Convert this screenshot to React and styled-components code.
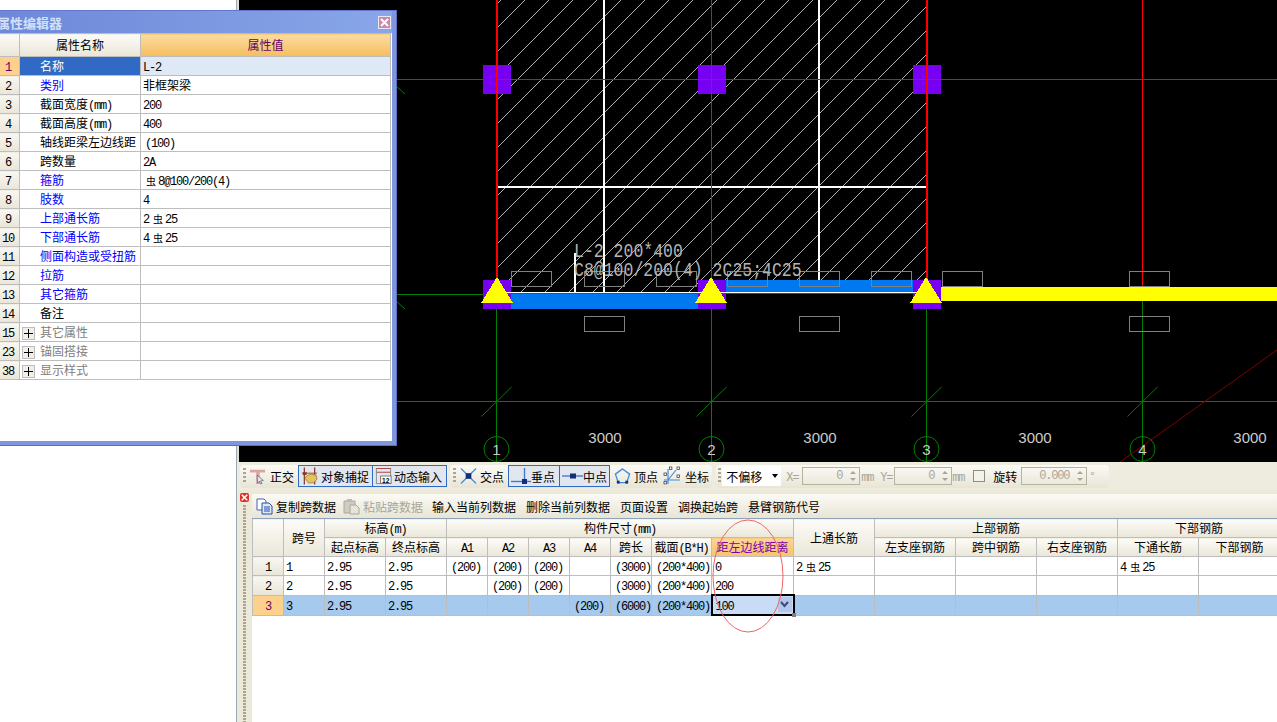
import React from "react";
import styled, { createGlobalStyle } from "styled-components";

// data

const PROPS = [
  { n: 1, name: "名称", value: "L-2", active: true },
  { n: 2, name: "类别", value: "非框架梁", link: true },
  { n: 3, name: "截面宽度(mm)", value: "200" },
  { n: 4, name: "截面高度(mm)", value: "400" },
  { n: 5, name: "轴线距梁左边线距", value: "(100)", inset: true },
  { n: 6, name: "跨数量", value: "2A" },
  { n: 7, name: "箍筋", value: "虫8@100/200(4)", link: true },
  { n: 8, name: "肢数", value: "4", link: true },
  { n: 9, name: "上部通长筋", value: "2虫25", link: true },
  { n: 10, name: "下部通长筋", value: "4虫25", link: true },
  { n: 11, name: "侧面构造或受扭筋", value: "", link: true },
  { n: 12, name: "拉筋", value: "", link: true },
  { n: 13, name: "其它箍筋", value: "", link: true },
  { n: 14, name: "备注", value: "" },
  { n: 15, name: "其它属性", value: "", group: true },
  { n: 23, name: "锚固搭接", value: "", group: true },
  { n: 38, name: "显示样式", value: "", group: true },
];

const COLS = [31, 41, 61, 61, 41, 41, 41, 41, 41, 60, 82, 81, 81, 81, 81, 81, 82];
const PADS = [0, 2, 2, 2, 4, 4, 4, 4, 4, 4, 3, 2, 2, 2, 2, 2, 2];

const SPANS = [
  ["1", "1", "2.95", "2.95", "(200)", "(200)", "(200)", "", "(3000)", "(200*400)", "0", "2虫25", "", "", "", "4虫25", ""],
  ["2", "2", "2.95", "2.95", "", "(200)", "(200)", "", "(3000)", "(200*400)", "200", "", "", "", "", "", ""],
  ["3", "3", "2.95", "2.95", "", "", "", "(200)", "(6000)", "(200*400)", "100", "", "", "", "", "", ""],
];

const UPPER_BOXES = [511, 584, 656, 727, 799, 871, 942, 1129];
const LOWER_BOXES = [584, 799, 1129];
const AXES = [
  { x: 496.5, label: "1" },
  { x: 711.5, label: "2" },
  { x: 926.5, label: "3" },
  { x: 1142.5, label: "4" },
];

// x + y = c, every 24px across the slab
const HATCH = Array.from({ length: 32 }, (_, i) => 476 + i * 24);

// latin text in the old bitmap font is half a CJK cell wide
function mixed(text) {
  return text
    .split(/([\x00-\x7f]+|虫)/)
    .filter(Boolean)
    .map((part, i) => {
      if (part === "虫") return <Rebar key={i} $lead={i > 0}>{part}</Rebar>;
      return /^[\x00-\x7f]/.test(part) ? <Lat key={i}>{part}</Lat> : part;
    });
}

// style

const GlobalStyle = createGlobalStyle`
  html, body {
    margin: 0;
    padding: 0;
    height: 100%;
    overflow: hidden;
    background: #fff;
  }
`;

const Lat = styled.span`
  font-family: "Liberation Mono", monospace;
  font-size: 12px;
  line-height: 1;
  letter-spacing: -1.2px;
`;

const Rebar = styled.span`
  font-size: 10px;
  line-height: 1;
  margin-left: ${(p) => (p.$lead ? "4px" : "3px")};
  margin-right: 2px;
`;

const Page = styled.div`
  position: relative;
  display: flex;
  width: 1277px;
  height: 722px;
  overflow: hidden;
  font-family: "Noto Sans CJK SC", sans-serif;
  font-size: 12px;
  color: #000;
`;

const LeftPane = styled.div`
  width: 236px;
  flex: none;
  background: #fff;
  border-right: 1px solid #9aa8ba;
`;

const Main = styled.div`
  flex: 1;
  min-width: 0;
  display: flex;
  flex-direction: column;
  background: #ece9d8;
`;

const CanvasWrap = styled.div`
  height: 462px;
  flex: none;
  padding-left: 2px;
  background: #e4e1d2;
`;

const Cad = styled.svg`
  display: block;
  width: 1038px;
  height: 462px;
  background: #000;
`;

const Dialog = styled.div`
  position: absolute;
  left: -9px;
  top: 10px;
  width: 406px;
  height: 436px;
  box-sizing: border-box;
  display: flex;
  flex-direction: column;
  background: #7f95dc;
  border: 1px solid #5f78cc;
  border-right-color: #5a70c4;
  border-bottom-color: #5a70c4;
  padding: 0 4px 4px 4px;
`;

const TitleBar = styled.div`
  height: 22px;
  flex: none;
  display: flex;
  align-items: center;
  justify-content: space-between;
  padding: 0 1px 0 1px;
  background: linear-gradient(90deg, #6d88d9, #88a6e8);
`;

const TitleText = styled.span`
  font-size: 13px;
  font-weight: 700;
  color: #d3e0f8;
`;

const CloseBox = styled.span`
  width: 11px;
  height: 11px;
  display: flex;
  align-items: center;
  justify-content: center;
  border: 1px solid #e8e8f4;
  background: #c98aa8;
`;

const DialogBody = styled.div`
  flex: 1;
  background: #fff;
  padding-right: 2px;
`;

const PropTable = styled.table`
  table-layout: fixed;
  width: 394px;
  border-collapse: collapse;
  line-height: 18px;
  white-space: nowrap;

  th, td {
    height: 18px;
    padding: 0;
    border: 1px solid #bdbdbd;
    overflow: hidden;
  }
`;

const HeadCell = styled.th`
  height: 22px !important;
  font-weight: 400;
  text-align: center;
  background: ${(p) =>
    p.$hot
      ? "linear-gradient(#fbdca0, #f5bd5e)"
      : "linear-gradient(#fcfbf7, #e9e6d8)"};
  color: ${(p) => (p.$hot ? "#660066" : "#000")};
`;

const NumCell = styled.td`
  text-align: center;
  background: ${(p) =>
    p.$active ? "#fdd18c" : "linear-gradient(#f8f7f1, #e9e6d8)"};
  color: ${(p) => (p.$active ? "#660066" : "#000")};
`;

const NameCell = styled.td`
  padding-left: ${(p) => (p.$group ? "2px" : "20px")} !important;
  background: ${(p) => (p.$active ? "#316ac5" : "#fff")};
  color: ${(p) =>
    p.$active ? "#fff" : p.$group ? "#808080" : p.$link ? "#0000ff" : "#000"};
`;

const ValueCell = styled.td`
  padding-left: ${(p) => (p.$inset ? "4px" : "2px")} !important;
  background: ${(p) => (p.$active ? "#dfe8f5" : "#fff")};
`;

const PlusBox = styled.span`
  display: inline-flex;
  align-items: center;
  justify-content: center;
  width: 11px;
  height: 11px;
  margin-right: 5px;
  vertical-align: -1px;
  border: 1px solid #bdbdbd;
  background: #f0efe8;
`;

const BottomPanel = styled.div`
  flex: 1;
  min-height: 0;
  display: flex;
  flex-direction: column;
`;

const SnapBar = styled.div`
  height: 28px;
  flex: none;
  display: flex;
  align-items: center;
  gap: 2px;
  padding-left: 3px;
  background: #eeecdf;
`;

const BarGroup = styled.div`
  height: 23px;
  display: flex;
  align-items: center;
  padding-left: ${(p) => p.$left}px;
  padding-right: ${(p) => p.$right}px;
  margin-left: ${(p) => p.$shift || 0}px;
  border-radius: 4px;
  background: linear-gradient(#fbfaf5, #e8e5d6);
`;

const Grip = styled.span`
  width: 3px;
  height: 16px;
  flex: none;
  margin-right: ${(p) => p.$gap}px;
  background: repeating-linear-gradient(#a8a596 0 2px, transparent 2px 4px);
`;

const ToolItem = styled.span`
  height: 22px;
  box-sizing: border-box;
  display: flex;
  align-items: center;
  gap: ${(p) => p.$gap ?? 3}px;
  padding: 0 ${(p) => p.$pr ?? 3}px 0 ${(p) => p.$pl ?? 2}px;
  white-space: nowrap;
  border: 1px solid ${(p) => (p.$on ? "#316ac5" : "transparent")};
  background: ${(p) => (p.$on ? "#e2e6ee" : "transparent")};
  margin-left: ${(p) => (p.$join ? "-1px" : "0")};
`;

const ComboBox = styled.span`
  width: 59px;
  height: 20px;
  box-sizing: border-box;
  display: flex;
  align-items: center;
  justify-content: space-between;
  padding: 0 3px 0 4px;
  background: #fff;
`;

const ComboArrow = styled.span`
  width: 0;
  height: 0;
  border-left: 3px solid transparent;
  border-right: 3px solid transparent;
  border-top: 4px solid #000;
`;

const Faint = styled.span`
  color: #a8a698;
  margin: ${(p) => p.$margin || "0"};
  line-height: 18px;
`;

const SpinField = styled.span`
  width: ${(p) => p.$width}px;
  height: 18px;
  box-sizing: border-box;
  display: flex;
  align-items: center;
  justify-content: flex-end;
  gap: 8px;
  padding-right: 3px;
  border: 1px solid #b5b29e;
  color: #a8a698;
`;

const SpinArrows = styled.span`
  display: flex;
  flex-direction: column;
  gap: 4px;

  i {
    display: block;
    width: 0;
    height: 0;
    border-left: 3px solid transparent;
    border-right: 3px solid transparent;
  }
  i:first-child {
    border-bottom: 3px solid #a8a698;
  }
  i:last-child {
    border-top: 3px solid #a8a698;
  }
`;

const CheckBox = styled.span`
  width: 10px;
  height: 10px;
  border: 1px solid #8e8c7c;
  background: #f4f3ea;
  margin: 0 8px 0 9px;
`;

const RotateLabel = styled.span`
  margin-right: 4px;
`;

const PanelBody = styled.div`
  flex: 1;
  min-height: 0;
  display: flex;
`;

const Gutter = styled.div`
  width: 15px;
  flex: none;
  display: flex;
  flex-direction: column;
  align-items: center;
  padding-top: 3px;
  gap: 3px;
`;

const CloseDot = styled.span`
  width: 9px;
  height: 9px;
  display: flex;
  align-items: center;
  justify-content: center;
  border-radius: 2px;
  background: #e0322c;
`;

const GutterGrip = styled.span`
  flex: 1;
  width: 3px;
  background: repeating-linear-gradient(#a8a596 0 2px, transparent 2px 3px);
`;

const PanelMain = styled.div`
  flex: 1;
  min-width: 0;
  display: flex;
  flex-direction: column;
  padding-top: 4px;
`;

const EditBar = styled.div`
  height: 24px;
  flex: none;
  display: flex;
  align-items: center;
  gap: 10px;
  padding-left: 4px;
  white-space: nowrap;
  background: linear-gradient(#fbfaf5, #e8e5d6);
`;

const EditItem = styled.span`
  display: flex;
  align-items: center;
  gap: 3px;
  color: ${(p) => (p.$off ? "#a8a698" : "#000")};
  margin: ${(p) => (p.$off ? "0 -1px 0 -3px" : "0")};
`;

const GridWrap = styled.div`
  position: relative;
  flex: 1;
  min-height: 0;
  overflow: hidden;
  background: #fff;
  border-top: 1px solid #8ea3b8;
`;

const SpanTable = styled.table`
  table-layout: fixed;
  width: 1028px;
  margin-top: -1px;
  border-collapse: collapse;
  white-space: nowrap;
  line-height: 18px;

  th, td {
    height: 18px;
    padding: 0;
    border: 1px solid #bdbdbd;
    overflow: hidden;
  }
`;

const SpanHead = styled.th`
  font-weight: 400;
  text-align: center;
  background: ${(p) =>
    p.$hot
      ? "linear-gradient(#fbd597, #f7c36e)"
      : "linear-gradient(#fcfbf7, #eae7d9)"};
  color: ${(p) => (p.$hot ? "#7a00a8" : "#000")};
`;

const SpanNum = styled.td`
  text-align: center;
  background: ${(p) =>
    p.$active ? "#fdd18c" : "linear-gradient(#f8f7f1, #e9e6d8)"};
  color: ${(p) => (p.$active ? "#660066" : "#000")};
`;

const SpanCell = styled.td`
  padding-left: ${(p) => p.$pad}px !important;
  background: ${(p) => (p.$selected ? "#a6c9ee" : "#fff")};
  ${(p) => p.$rule && "border-left: 1px solid #000 !important;"}
`;

const ActiveCell = styled.td`
  position: relative;
  height: 17px !important;
  overflow: visible !important;
  padding-left: 3px !important;
  background: #c8dcf5;
  border: 2px solid #000 !important;
`;

const DropButton = styled.span`
  position: absolute;
  right: 1px;
  top: 1px;
  width: 14px;
  height: 15px;
  display: flex;
  align-items: center;
  justify-content: center;
  background: #b4c6ec;
`;

const FillHandle = styled.span`
  position: absolute;
  right: -3px;
  bottom: -3px;
  width: 4px;
  height: 4px;
  background: #808080;
`;

const Ellipse = styled.svg`
  position: absolute;
  left: 460px;
  top: 0;
  width: 72px;
  height: 114px;
  overflow: visible;
  pointer-events: none;
`;

// icons

const OrthoIcon = () => (
  <svg width="16" height="20" viewBox="0 0 18 20">
    <path d="M0 3h17v3h-6v13H7V6H0z" fill="#dca4a0" />
    <path d="M8 9l7 6-3 .5 1.5 3-1.5.5-1.5-3-2 2z" fill="#dfe6f0" stroke="#56606e" strokeWidth=".8" />
  </svg>
);

const SnapIcon = () => (
  <svg width="17" height="20" viewBox="0 0 18 20">
    <path d="M3.5 1v18M14.5 1v18" stroke="#7a2a20" strokeWidth="1.2" />
    <path d="M1 7h16" stroke="#b03a30" strokeWidth="1" />
    <path d="M2 6h4v3H2z" fill="#8a3a28" />
    <path d="M4 12l5-4 7 1 1 4-3 4-6 .5z" fill="#e6c25a" stroke="#8a6a20" strokeWidth=".7" />
  </svg>
);

const InputIcon = () => (
  <svg width="17" height="20" viewBox="0 0 18 20">
    <path d="M1 2h16M1 6h16" stroke="#b04a48" strokeWidth="1.2" />
    <path d="M1.5 2v16M16.5 2v16M1 18h16" stroke="#8a8a8a" strokeWidth="1" fill="none" />
    <rect x="6" y="10" width="11" height="8" fill="#fff" stroke="#555" strokeWidth=".8" />
    <text x="7.5" y="17" fontFamily="Liberation Sans, sans-serif" fontSize="7" fontWeight="700">12</text>
  </svg>
);

const CrossIcon = () => (
  <svg width="17" height="18" viewBox="0 0 18 18">
    <path d="M1 1l16 16M17 1L1 17" stroke="#3f8ce0" strokeWidth="1.3" />
    <rect x="6" y="6" width="6" height="6" fill="#10307a" />
  </svg>
);

const PerpIcon = () => (
  <svg width="20" height="18" viewBox="0 0 20 18">
    <path d="M0 14.5h20" stroke="#3f7cd0" strokeWidth="1.4" />
    <path d="M13.5 1v16" stroke="#3f7cd0" strokeWidth="1.4" />
    <rect x="11" y="12" width="5" height="5" fill="#10307a" />
  </svg>
);

const MidIcon = () => (
  <svg width="21" height="18" viewBox="0 0 21 18">
    <path d="M0 9h21" stroke="#3f7cd0" strokeWidth="1.4" />
    <rect x="8" y="6.5" width="6" height="5" fill="#10307a" />
  </svg>
);

const VertexIcon = () => (
  <svg width="17" height="18" viewBox="0 0 18 18">
    <path d="M9 1.5l7.5 5.5-3 9h-9l-3-9z" fill="none" stroke="#3f8ce0" strokeWidth="1.4" />
    <rect x="3" y="14" width="3" height="3" fill="#10307a" />
    <rect x="12" y="14" width="3" height="3" fill="#10307a" />
  </svg>
);

const CoordIcon = () => (
  <svg width="18" height="20" viewBox="0 0 18 20">
    <path d="M5 3v15M1 14h16M5 14l8-10" stroke="#3f8ce0" strokeWidth="1.2" fill="none" />
    <g fill="#fff" stroke="#445" strokeWidth=".8">
      <rect x="1" y="7" width="2.4" height="2.4" />
      <rect x="1" y="15.5" width="2.4" height="2.4" />
      <rect x="6.5" y="1" width="2.4" height="2.4" />
      <rect x="14" y="1" width="2.4" height="2.4" />
      <rect x="14" y="9" width="2.4" height="2.4" />
    </g>
  </svg>
);

const CopyIcon = () => (
  <svg width="17" height="17" viewBox="0 0 17 17">
    <path d="M1 1h7l2 2v9H1z" fill="#fff" stroke="#3a66b8" />
    <path d="M6 5h7l3 3v8H6z" fill="#dbe8fa" stroke="#2a4fa0" />
    <path d="M8 9h6M8 11h6M8 13h6" stroke="#2a4fa0" />
  </svg>
);

const PasteIcon = () => (
  <svg width="17" height="17" viewBox="0 0 17 17">
    <path d="M1 3h11v12H1z" fill="#cfcdc2" stroke="#aaa89c" />
    <path d="M4 1h5v3H4z" fill="#bdbbb0" />
    <path d="M7 7h6l3 3v6H7z" fill="#e6e4da" stroke="#aaa89c" />
  </svg>
);

const WhiteX = ({ size = 9, width = 2 }) => (
  <svg width={size} height={size} viewBox="0 0 9 9">
    <path d="M1 1l7 7M8 1L1 8" stroke="#fff" strokeWidth={width} />
  </svg>
);

// the drawing

function Drawing() {
  return (
    <Cad viewBox="239 0 1038 462" shapeRendering="crispEdges">
      <defs>
        <clipPath id="slab">
          <rect x="498" y="0" width="428" height="293" />
        </clipPath>
      </defs>

      {/* grid */}
      <path d="M396 79.5H497M396 294.5H497M396 401.5H1277" stroke="#008000" />
      <path d="M396 86L405 94M396 301L405 309" stroke="#008000" shapeRendering="auto" />
      {AXES.map((a) => (
        <g key={a.label}>
          <path d={`M${a.x} 294V462`} stroke="#008000" />
          <path
            d={`M${a.x - 15} 416.5L${a.x + 15} 387`}
            stroke="#008000"
            shapeRendering="auto"
          />
          <circle
            cx={a.x}
            cy="449"
            r="12.5"
            fill="none"
            stroke="#008000"
            shapeRendering="auto"
          />
        </g>
      ))}
      <path d="M1120 462L1277 350" stroke="#800000" shapeRendering="auto" />

      {/* slab */}
      <g clipPath="url(#slab)" stroke="#b0b0b0">
        {HATCH.map((c) => (
          <path key={c} d={`M${c + 0.5} 0.5L${c - 299.5} 300.5`} />
        ))}
      </g>
      <path d="M604 0V293M819 0V293M574.5 253V293" stroke="#fff" strokeWidth="2" />
      <path d="M497 187H926" stroke="#fff" strokeWidth="2" />

      {/* beams */}
      <rect x="497" y="294" width="214" height="15" fill="#0078f0" />
      <rect x="726" y="280" width="200" height="13" fill="#0078f0" />
      <rect x="941" y="287" width="336" height="14" fill="#ffff00" />

      {[483, 698, 913].map((x) => (
        <g key={x} fill="#7800f0">
          <rect x={x} y="65" width="28" height="29" />
          <rect x={x} y="280" width="28" height="29" />
        </g>
      ))}

      <path d="M496.5 0V294M497.5 0V294M926 0V294M927 0V294" stroke="#ff0000" />
      <path d="M711.5 0V280M1142.5 0V287" stroke="#ff0000" />
      <path d="M497 79.5H1277" stroke="#ff0000" />
      <path d="M497 292.5H926" stroke="#fff" />
      <path d="M497 293.5H927" stroke="#ff0000" />

      {[497, 711, 926].map((x) => (
        <path key={x} d={`M${x} 277L${x + 16} 303H${x - 16}z`} fill="#ffff00" />
      ))}

      {UPPER_BOXES.map((x) => (
        <rect key={x} x={x + 0.5} y="271.5" width="40" height="15" fill="none" stroke="#808080" />
      ))}
      {LOWER_BOXES.map((x) => (
        <rect key={x} x={x + 0.5} y="316.5" width="40" height="15" fill="none" stroke="#808080" />
      ))}

      {/* texts, stretched tall like CAD text */}
      <g shapeRendering="auto" fill="#b4b4b4" fontFamily="Liberation Mono, monospace" fontSize="20">
        <text transform="translate(574 257) scale(0.825 1)">L-2 200*400</text>
        <text transform="translate(574 276) scale(0.825 1)">C8@100/200(4) 2C25;4C25</text>
      </g>
      <g fill="#cccccc" fontFamily="Liberation Sans, sans-serif" fontSize="15" textAnchor="middle">
        {[605, 820, 1035, 1250].map((x) => (
          <text key={x} x={x} y="443">3000</text>
        ))}
        {AXES.map((a) => (
          <text key={a.label} x={a.x} y="455">{a.label}</text>
        ))}
      </g>
    </Cad>
  );
}

// code

function PropertyEditor() {
  return (
    <Dialog>
      <TitleBar>
        <TitleText>属性编辑器</TitleText>
        <CloseBox>
          <WhiteX />
        </CloseBox>
      </TitleBar>
      <DialogBody>
        <PropTable>
          <colgroup>
            <col style={{ width: 23 }} />
            <col style={{ width: 121 }} />
            <col style={{ width: 250 }} />
          </colgroup>
          <thead>
            <tr>
              <HeadCell />
              <HeadCell>属性名称</HeadCell>
              <HeadCell $hot>属性值</HeadCell>
            </tr>
          </thead>
          <tbody>
            {PROPS.map((row) => (
              <tr key={row.n}>
                <NumCell $active={row.active}>{mixed(String(row.n))}</NumCell>
                <NameCell $active={row.active} $link={row.link} $group={row.group}>
                  {row.group && (
                    <PlusBox>
                      <svg width="9" height="9" viewBox="0 0 9 9">
                        <path d="M4.5 0v9M0 4.5h9" stroke="#000" shapeRendering="crispEdges" />
                      </svg>
                    </PlusBox>
                  )}
                  {mixed(row.name)}
                </NameCell>
                <ValueCell $active={row.active} $inset={row.inset}>
                  {mixed(row.value)}
                </ValueCell>
              </tr>
            ))}
          </tbody>
        </PropTable>
      </DialogBody>
    </Dialog>
  );
}

function SnapToolbar() {
  return (
    <SnapBar>
      <BarGroup $left={3} $right={1}>
        <Grip $gap={3} />
        <ToolItem $pl={0} $gap={4}>
          <OrthoIcon />
          正交
        </ToolItem>
        <ToolItem $on>
          <SnapIcon />
          对象捕捉
        </ToolItem>
        <ToolItem $on $join $gap={2} $pr={4}>
          <InputIcon />
          动态输入
        </ToolItem>
      </BarGroup>
      <BarGroup $left={3} $right={1}>
        <Grip $gap={3} />
        <ToolItem $pl={0}>
          <CrossIcon />
          交点
        </ToolItem>
        <ToolItem $on $gap={0} $pr={4}>
          <PerpIcon />
          垂点
        </ToolItem>
        <ToolItem $on $join $gap={0} $pr={2}>
          <MidIcon />
          中点
        </ToolItem>
        <ToolItem $pl={3} $pr={1}>
          <VertexIcon />
          顶点
        </ToolItem>
        <ToolItem $pl={2} $gap={4} $pr={1}>
          <CoordIcon />
          坐标
        </ToolItem>
      </BarGroup>
      <BarGroup $left={2} $right={14} $shift={2}>
        <Grip $gap={1} />
        <ComboBox>
          不偏移
          <ComboArrow />
        </ComboBox>
        <Faint $margin="0 4px 0 5px">{mixed("X=")}</Faint>
        <SpinField $width={58}>
          {mixed("0")}
          <SpinArrows>
            <i />
            <i />
          </SpinArrows>
        </SpinField>
        <Faint $margin="0 7px 0 1px">{mixed("mm")}</Faint>
        <Faint $margin="0 2px 0 0">{mixed("Y=")}</Faint>
        <SpinField $width={58}>
          {mixed("0")}
          <SpinArrows>
            <i />
            <i />
          </SpinArrows>
        </SpinField>
        <Faint>{mixed("mm")}</Faint>
        <CheckBox />
        <RotateLabel>旋转</RotateLabel>
        <SpinField $width={66}>
          {mixed("0.000")}
          <SpinArrows>
            <i />
            <i />
          </SpinArrows>
        </SpinField>
        <Faint $margin="0 0 0 3px">°</Faint>
      </BarGroup>
    </SnapBar>
  );
}

function EditToolbar() {
  return (
    <EditBar>
      <EditItem>
        <CopyIcon />
        复制跨数据
      </EditItem>
      <EditItem $off>
        <PasteIcon />
        粘贴跨数据
      </EditItem>
      <EditItem>输入当前列数据</EditItem>
      <EditItem>删除当前列数据</EditItem>
      <EditItem>页面设置</EditItem>
      <EditItem>调换起始跨</EditItem>
      <EditItem>悬臂钢筋代号</EditItem>
    </EditBar>
  );
}

function SpanGrid() {
  return (
    <GridWrap>
      <SpanTable>
        <colgroup>
          {COLS.map((w, i) => (
            <col key={i} style={{ width: w }} />
          ))}
        </colgroup>
        <thead>
          <tr>
            <SpanHead rowSpan={2} />
            <SpanHead rowSpan={2}>跨号</SpanHead>
            <SpanHead colSpan={2}>标高{mixed("(m)")}</SpanHead>
            <SpanHead colSpan={7}>构件尺寸{mixed("(mm)")}</SpanHead>
            <SpanHead rowSpan={2}>上通长筋</SpanHead>
            <SpanHead colSpan={3}>上部钢筋</SpanHead>
            <SpanHead colSpan={2}>下部钢筋</SpanHead>
          </tr>
          <tr>
            <SpanHead>起点标高</SpanHead>
            <SpanHead>终点标高</SpanHead>
            <SpanHead>{mixed("A1")}</SpanHead>
            <SpanHead>{mixed("A2")}</SpanHead>
            <SpanHead>{mixed("A3")}</SpanHead>
            <SpanHead>{mixed("A4")}</SpanHead>
            <SpanHead>跨长</SpanHead>
            <SpanHead>截面{mixed("(B*H)")}</SpanHead>
            <SpanHead $hot>距左边线距离</SpanHead>
            <SpanHead>左支座钢筋</SpanHead>
            <SpanHead>跨中钢筋</SpanHead>
            <SpanHead>右支座钢筋</SpanHead>
            <SpanHead>下通长筋</SpanHead>
            <SpanHead>下部钢筋</SpanHead>
          </tr>
        </thead>
        <tbody>
          {SPANS.map((row, r) => {
            const selected = r === 2;
            return (
              <tr key={r}>
                <SpanNum $active={selected}>{mixed(row[0])}</SpanNum>
                {row.slice(1).map((value, i) => {
                  const col = i + 1;
                  if (selected && col === 10) {
                    return (
                      <ActiveCell key={col}>
                        {mixed(value)}
                        <DropButton>
                          <svg width="9" height="7" viewBox="0 0 9 7">
                            <path d="M1 1l3.5 4L8 1" fill="none" stroke="#3c4a78" strokeWidth="2" />
                          </svg>
                        </DropButton>
                        <FillHandle />
                      </ActiveCell>
                    );
                  }
                  return (
                    <SpanCell key={col} $pad={PADS[col]} $selected={selected} $rule={col === 2}>
                      {mixed(value)}
                    </SpanCell>
                  );
                })}
              </tr>
            );
          })}
        </tbody>
      </SpanTable>
      <Ellipse viewBox="0 0 72 114">
        <ellipse cx="36" cy="57" rx="35" ry="56" fill="none" stroke="#f06464" />
      </Ellipse>
    </GridWrap>
  );
}

function App() {
  return (
    <Page>
      <GlobalStyle />
      <LeftPane />
      <Main>
        <CanvasWrap>
          <Drawing />
        </CanvasWrap>
        <BottomPanel>
          <SnapToolbar />
          <PanelBody>
            <Gutter>
              <CloseDot>
                <WhiteX size={7} />
              </CloseDot>
              <GutterGrip />
            </Gutter>
            <PanelMain>
              <EditToolbar />
              <SpanGrid />
            </PanelMain>
          </PanelBody>
        </BottomPanel>
      </Main>
      <PropertyEditor />
    </Page>
  );
}

export default App;
